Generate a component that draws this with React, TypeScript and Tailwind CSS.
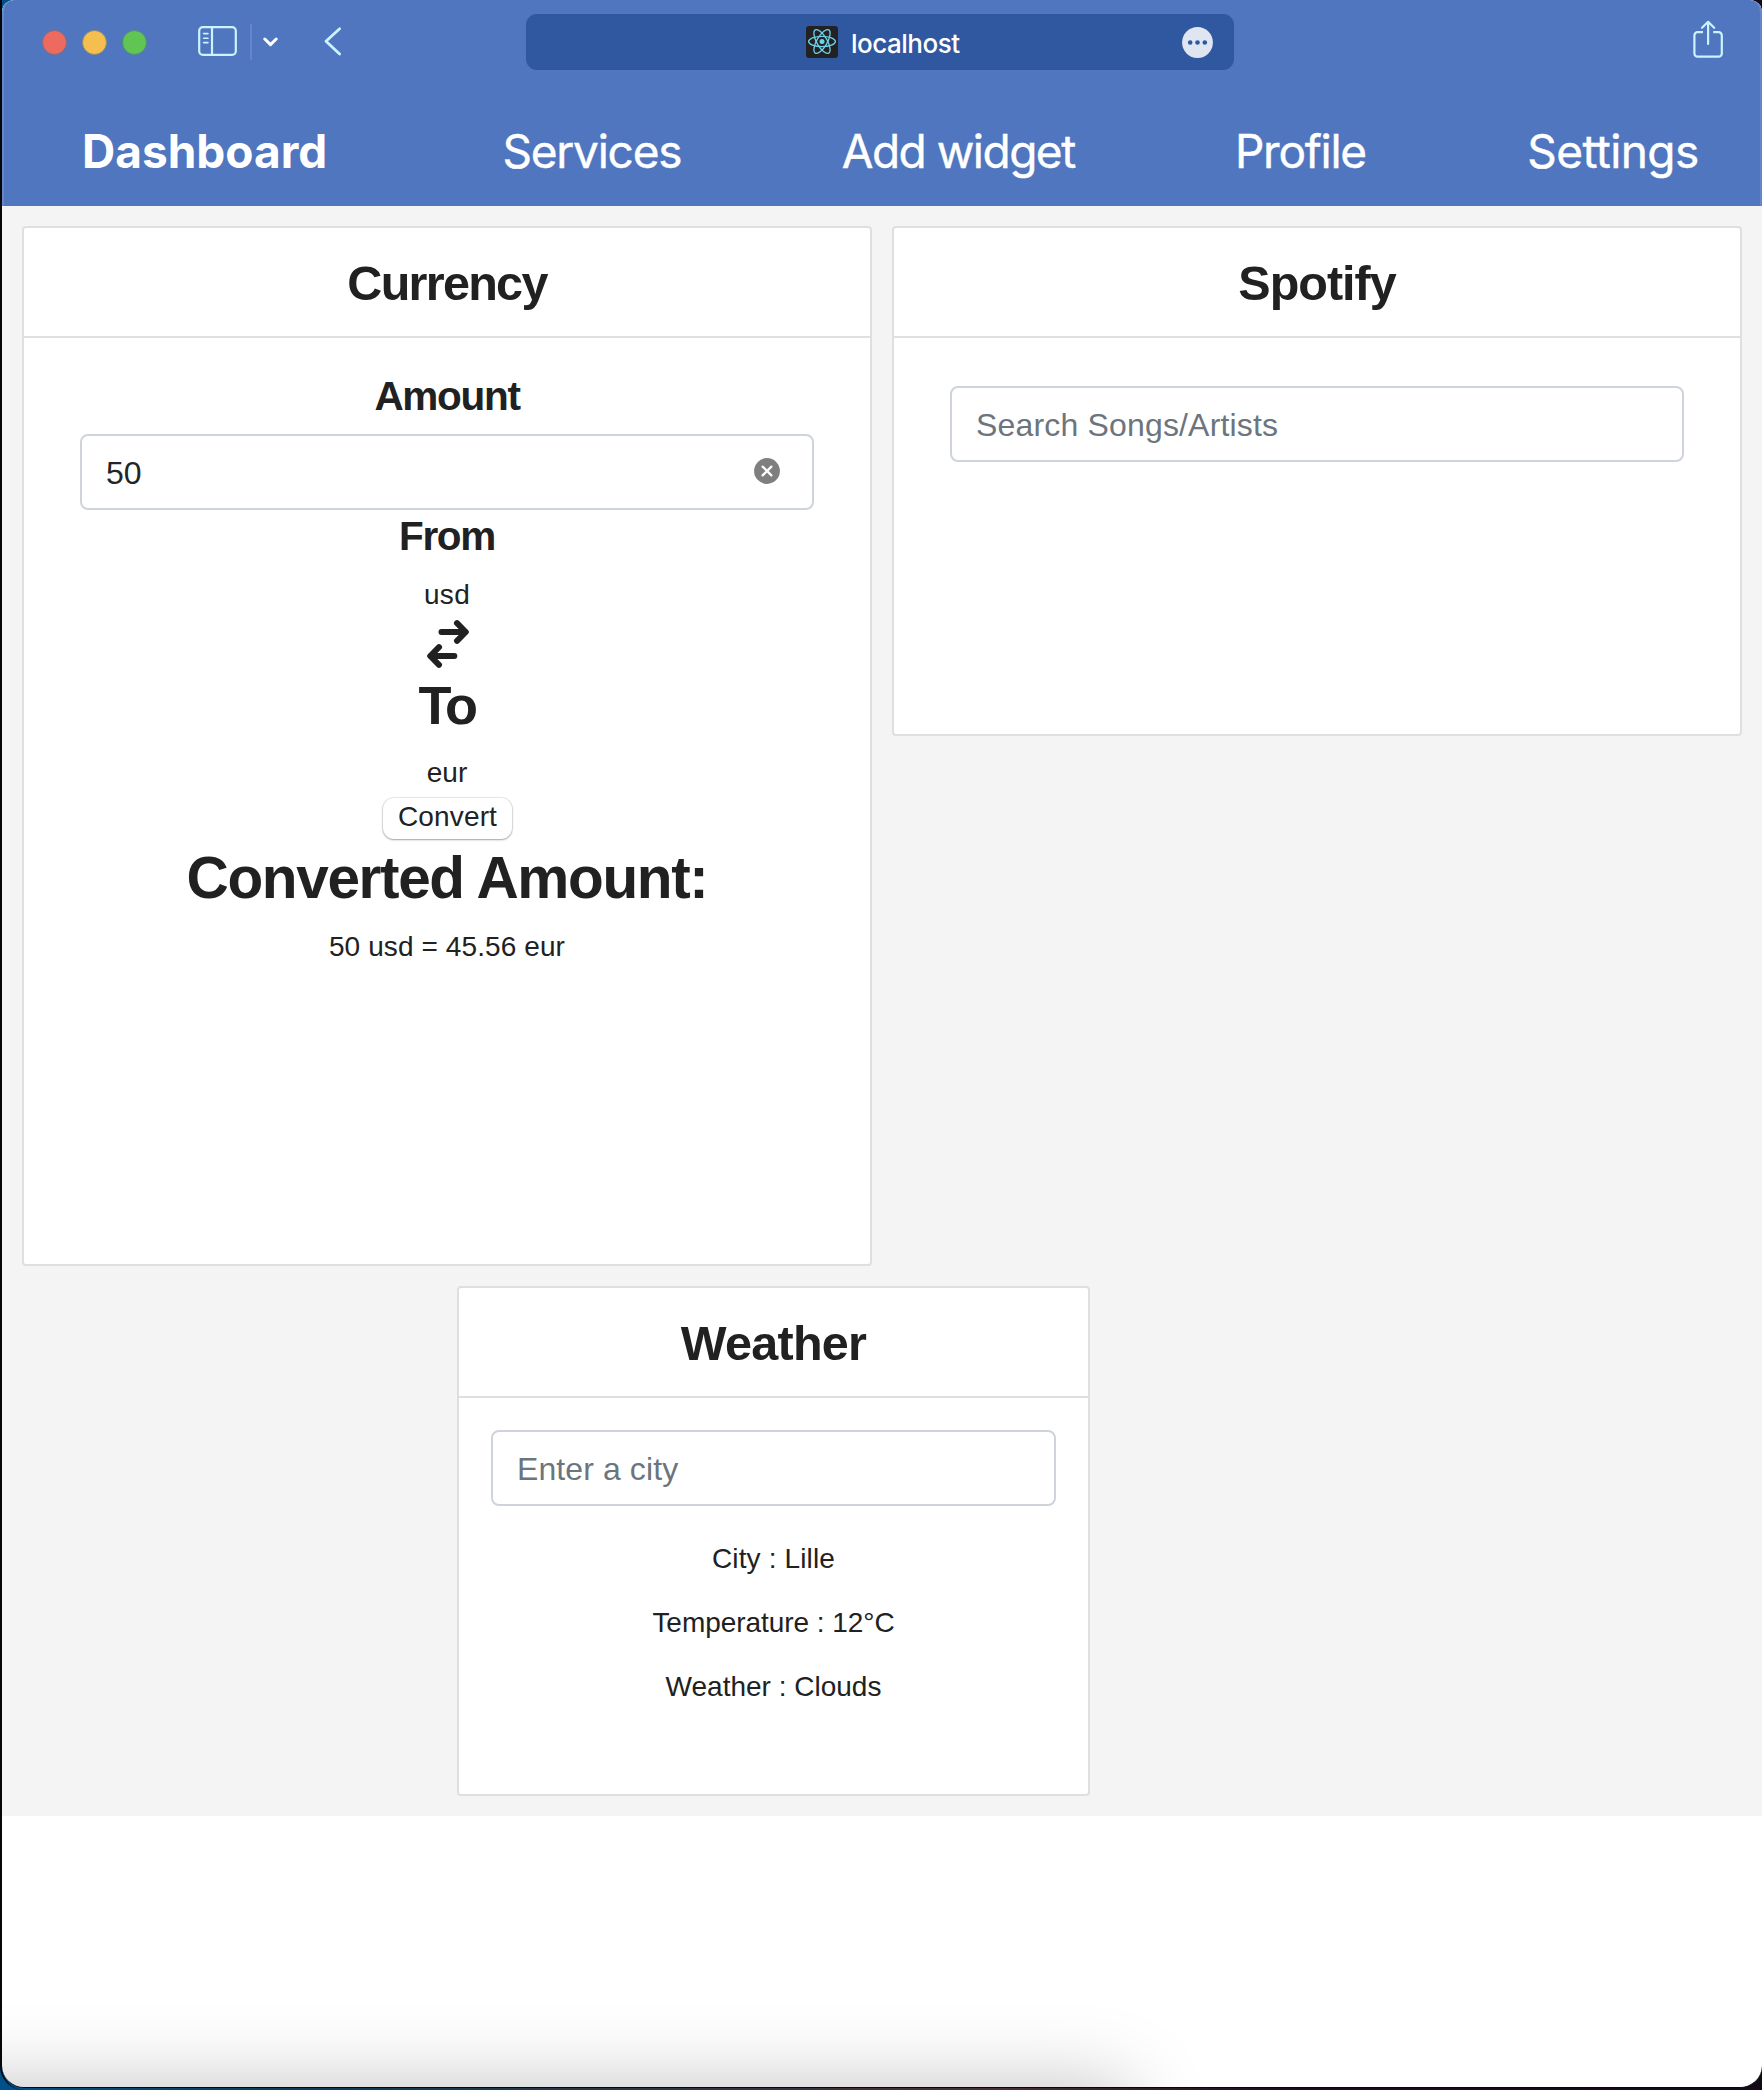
import type { ReactNode } from 'react';

const navItems = [
  { label: 'Dashboard', cls: 'w-[420.5px] font-bold' },
  { label: 'Services', cls: 'w-[339.2px] tracking-[-1.25px] [-webkit-text-stroke:0.4px_#ffffff]' },
  { label: 'Add widget', cls: 'w-[393.3px] tracking-[-1.5px] [-webkit-text-stroke:0.4px_#ffffff]' },
  { label: 'Profile', cls: 'w-[292.3px] tracking-[-1.25px] [-webkit-text-stroke:0.4px_#ffffff]' },
  { label: 'Settings', cls: 'tracking-[-0.6px] [-webkit-text-stroke:0.4px_#ffffff]' },
];

function SidebarIcon() {
  return (
    <svg className="mb-[2px] ml-[51px] h-[30px] w-[39px]" viewBox="0 0 39 30" fill="none" stroke="#cdf3ff" strokeWidth="2.2" strokeLinecap="round">
      <rect x="1.2" y="1.2" width="36.6" height="27.6" rx="3.6" />
      <path d="M14 1.5V28.5" strokeLinecap="butt" />
      <path d="M5.6 7.6H10M5.6 12.2H10M5.6 16.6H10" strokeWidth="1.6" />
    </svg>
  );
}

function ReactLogo() {
  return (
    <svg className="h-8 w-8" viewBox="0 0 32 32" fill="none" stroke="#6fd0ea" strokeWidth="1.3">
      <rect width="32" height="32" rx="3" fill="#222222" stroke="none" />
      <circle cx="16" cy="15.5" r="2.5" fill="#6fd0ea" stroke="none" />
      <ellipse cx="16" cy="15.5" rx="13.4" ry="5.2" />
      <ellipse cx="16" cy="15.5" rx="13.4" ry="5.2" transform="rotate(60 16 15.5)" />
      <ellipse cx="16" cy="15.5" rx="13.4" ry="5.2" transform="rotate(120 16 15.5)" />
    </svg>
  );
}

function ShareIcon() {
  return (
    <svg className="mr-[37px] mb-[6px] ml-auto h-[38px] w-[30px]" viewBox="0 0 30 38" fill="none" stroke="#cdf3ff" strokeWidth="2.2" strokeLinecap="round" strokeLinejoin="round">
      <path d="M10 12.2H4.6A3.2 3.2 0 0 0 1.4 15.4V33.4A3.2 3.2 0 0 0 4.6 36.6H25.6A3.2 3.2 0 0 0 28.8 33.4V15.4A3.2 3.2 0 0 0 25.6 12.2H20.2" strokeLinecap="butt" />
      <path d="M15.1 24V2M9 7.8L15.1 1.8L21.2 7.8" />
    </svg>
  );
}

function SwapIcon() {
  return (
    <svg className="mt-[5px] ml-[2px] h-12 w-[42px]" viewBox="0 0 42 48" fill="none" stroke="#212121" strokeWidth="6" strokeLinecap="round" strokeLinejoin="round">
      <path d="M14.5 12H38M30 3.2L38.8 12L30 20.8" />
      <path d="M27.3 36H4M12 27.2L3.2 36L12 44.8" />
    </svg>
  );
}

function Card({ title, className, titleClass, children }: { title: string; className: string; titleClass: string; children: ReactNode }) {
  return (
    <section className={`flex flex-col rounded-[4px] border-2 border-[#dfdfdf] bg-white ${className}`}>
      <h4 className={`h-[110px] border-b-2 border-[#dfdfdf] pt-[2px] text-center text-[48.5px] leading-[107px] font-bold ${titleClass}`}>{title}</h4>
      <div className="flex flex-col items-center">{children}</div>
    </section>
  );
}

const fieldClass = 'h-[76px] rounded-[8px] border-2 border-[#ced4da] bg-white px-6 pt-[2px] text-[32px] text-[#212529] outline-none placeholder:text-[#6c757d] placeholder:opacity-100';

export default function App() {
  return (
    <div className="h-[2090px] w-[1762px] overflow-hidden bg-[linear-gradient(90deg,#00508a_0,#123c55_300px,#4a3035_1000px,#180c1c_1300px,#120a18_100%)] font-['Liberation_Sans',Arial,sans-serif] text-[#212121]">
      <div className="h-[2090px] rounded-bl-[24px] border-l-2 border-[#05070a]">
        <div className="relative flex h-[2088px] flex-col overflow-hidden rounded-t-[12px] rounded-b-[22px] border-b border-[#05070a] bg-white">
          <header className="h-[206px] shrink-0 rounded-t-[12px] border-x-2 border-[#6586c9] bg-[#4f76bf] font-[Inter,sans-serif] text-white">
            <div className="flex h-[84px] items-center">
              <div className="ml-[38px] flex gap-[15px]">
                <span className="size-[25px] rounded-full border border-[#8b6a80] bg-[#ed6a5e]" />
                <span className="size-[25px] rounded-full border border-[#8f8a75] bg-[#f5bf4f]" />
                <span className="size-[25px] rounded-full border border-[#4f8f75] bg-[#61c554]" />
              </div>
              <SidebarIcon />
              <span className="ml-[13px] h-9 w-[2px] bg-[#6587ca]" />
              <svg className="ml-[11px] h-[10px] w-[15px]" viewBox="0 0 15 10" fill="none" stroke="#ffffff" strokeWidth="3" strokeLinecap="round" strokeLinejoin="round">
                <path d="M1.8 2L7.5 7.6L13.2 2" />
              </svg>
              <svg className="mb-[2px] ml-[46px] h-[29px] w-[18px]" viewBox="0 0 18 29" fill="none" stroke="#cdf3ff" strokeWidth="2.8" strokeLinecap="round" strokeLinejoin="round">
                <path d="M15.6 1.8L2 14.3L15.6 27" />
              </svg>
              <div className="ml-[184px] flex h-14 w-[708px] items-center rounded-[11px] bg-[#3058a0]">
                <span className="ml-[280px]"><ReactLogo /></span>
                <span className="ml-[13px] pt-[4px] text-[26px] leading-8 font-medium tracking-[-0.5px]">localhost</span>
                <svg className="mr-[21px] ml-auto h-[31px] w-[31px]" viewBox="0 0 31 31">
                  <circle cx="15.5" cy="15.5" r="15.4" fill="#dfe6f2" />
                  <g fill="#3058a0"><circle cx="8.2" cy="15.5" r="2.3" /><circle cx="15.5" cy="15.5" r="2.3" /><circle cx="22.8" cy="15.5" r="2.3" /></g>
                </svg>
              </div>
              <ShareIcon />
            </div>
            <nav className="flex pt-[37px] pl-[78px] text-[46px] leading-[60px] whitespace-nowrap">
              {navItems.map((n) => (
                <a key={n.label} className={`shrink-0 ${n.cls}`}>{n.label}</a>
              ))}
            </nav>
          </header>

          <main className="flex h-[1610px] shrink-0 flex-col gap-5 bg-[#f4f4f4] p-5">
            <div className="flex items-start gap-5">
              <Card title="Currency" className="h-[1040px] w-[850px]" titleClass="tracking-[-1.7px]">
                <h5 className="mt-[34px] text-[40.5px] leading-[48px] font-bold tracking-[-1.3px]">Amount</h5>
                <div className="relative mt-[14px]">
                  <input className={`w-[734px] ${fieldClass}`} defaultValue="50" />
                  <svg className="absolute top-6 right-[34px] h-[26px] w-[26px]" viewBox="0 0 26 26">
                    <circle cx="13" cy="13" r="12.9" fill="#7f7f7f" />
                    <path d="M8.6 8.6L17.4 17.4M17.4 8.6L8.6 17.4" stroke="#ffffff" strokeWidth="2.2" strokeLinecap="round" />
                  </svg>
                </div>
                <h5 className="mt-[2px] text-[40.5px] leading-[48px] font-bold tracking-[-1.3px]">From</h5>
                <p className="mt-[14px] text-[28px] leading-[42px] tracking-[0.3px]">usd</p>
                <div className="-mt-px"><SwapIcon /></div>
                <h3 className="mt-[5px] text-[54px] leading-[64px] font-bold tracking-[-2.5px]">To</h3>
                <p className="mt-[15px] text-[28px] leading-[42px]">eur</p>
                <button className="mt-[4px] ml-px h-[41px] w-[129px] rounded-[11px] bg-white pb-[3px] text-[28px] leading-9 tracking-[0.15px] shadow-[0_0_1px_1px_rgba(0,0,0,0.09),0_1px_2px_rgba(0,0,0,0.3)]">Convert</button>
                <h2 className="mt-[3px] text-[58.5px] leading-[72px] font-bold tracking-[-1.35px]">Converted Amount:</h2>
                <p className="mt-3 text-[28px] leading-[42px] tracking-[0.1px]">50 usd = 45.56 eur</p>
              </Card>
              <Card title="Spotify" className="h-[510px] w-[850px]" titleClass="tracking-[-1px]">
                <input className={`mt-12 w-[734px] tracking-[0.17px] ${fieldClass}`} placeholder="Search Songs/Artists" />
              </Card>
            </div>
            <Card title="Weather" className="ml-[435px] h-[510px] w-[633px]" titleClass="tracking-[-0.7px]">
              <input className={`mt-8 w-[565px] tracking-[0.1px] ${fieldClass}`} placeholder="Enter a city" />
              <div className="mt-8 flex flex-col items-center gap-[22px] text-[28px] leading-[42px]">
                <p className="tracking-[0.15px]">City : Lille</p>
                <p className="tracking-[-0.05px]">Temperature : 12°C</p>
                <p>Weather : Clouds</p>
              </div>
            </Card>
          </main>
          <div className="absolute -bottom-[100px] -left-[100px] h-[100px] w-[1225px] shadow-[0_0_80px_rgba(0,0,0,0.25)]" />
        </div>
      </div>
    </div>
  );
}
